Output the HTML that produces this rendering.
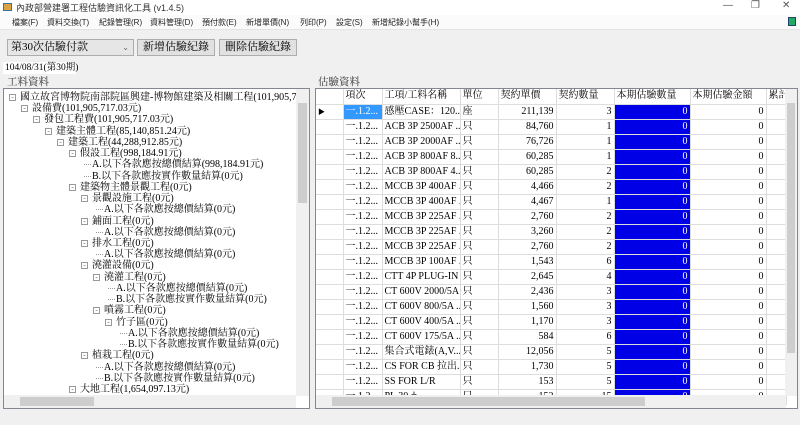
<!DOCTYPE html>
<html><head><meta charset="utf-8"><style>
*{margin:0;padding:0;box-sizing:border-box}
body{width:800px;height:425px;overflow:hidden;background:#f0f0f0;font-family:"Liberation Serif","Noto Serif CJK SC",serif;font-size:11px;color:#000;position:relative}
.abs{position:absolute;white-space:nowrap}
.ui{font-family:"Liberation Sans","Noto Sans CJK SC",sans-serif}
#title{left:0;top:0;width:800px;height:15px;background:#fff}
#menu{left:0;top:15px;width:800px;height:15px;background:#fbfbfb;border-bottom:1px solid #e4e4e4}
.m{position:absolute;top:2px;font-size:8px;color:#222}
.btn{position:absolute;top:39px;height:17px;background:#e1e1e1;border:1px solid #adadad;font-size:11px;text-align:center;line-height:15px}
#tree{left:3px;top:88px;width:307px;height:321px;background:#fff;border:1px solid #828790;overflow:hidden}
.tn{position:absolute;height:11px;line-height:11px;font-size:10px;white-space:nowrap}
.bx{position:absolute;width:7px;height:7px;border:1px solid #999;background:#fff;font-size:7px;line-height:5px;text-align:center;color:#555}
#grid{left:315px;top:88px;width:483px;height:321px;background:#fff;border:1px solid #828790;overflow:hidden}
table{border-collapse:collapse;position:absolute;left:0;top:0;table-layout:fixed;width:470px}
td{height:15px;border-right:1px solid #ddd;border-bottom:1px solid #ddd;font-size:10px;padding:0 2px;overflow:hidden;white-space:nowrap;line-height:14px}
tr.h td{background:#fff;height:15px}
td.r{text-align:right}
td.b{background:#0000e6;color:#fff;text-align:right}
td.rh{background:#fff;font-size:7px}
</style></head><body>
<div id="title" class="abs ui"><div style="position:absolute;left:3px;top:3px;width:9px;height:8px;background:#d9a441;border:1px solid #3a6ea5"></div><span style="position:absolute;left:16px;top:1px;font-size:9px;color:#333">內政部營建署工程估驗資訊化工具 (v1.4.5)</span>
<span style="position:absolute;left:723px;top:0;font-size:10px;color:#555">—</span><span style="position:absolute;left:751px;top:0;font-size:10px;color:#555">❐</span><span style="position:absolute;left:782px;top:0;font-size:10px;color:#555">✕</span></div>
<div id="menu" class="abs ui">
<span class="m" style="left:12px">檔案(F)</span><span class="m" style="left:47px">資料交換(T)</span><span class="m" style="left:99px">紀錄管理(R)</span><span class="m" style="left:150px">資料管理(D)</span><span class="m" style="left:202px">預付款(E)</span><span class="m" style="left:246px">新增單價(N)</span><span class="m" style="left:300px">列印(P)</span><span class="m" style="left:336px">設定(S)</span><span class="m" style="left:372px">新增紀錄小幫手(H)</span>
<div style="position:absolute;left:788px;top:2px;width:8px;height:9px;background:#2a6;border:1px solid #246"></div></div>
<div class="abs" style="left:7px;top:39px;width:127px;height:17px;background:#e6e6e6;border:1px solid #adadad;font-size:11px;line-height:15px;padding-left:3px">第30次估驗付款<span style="position:absolute;right:4px;top:0;font-size:8px;color:#666">⌄</span></div>
<div class="btn" style="left:137px;width:78px">新增估驗紀錄</div>
<div class="btn" style="left:219px;width:78px">刪除估驗紀錄</div>
<div class="abs" style="left:3px;top:62px;width:73px;height:12px;background:#fff;font-size:9.5px;line-height:12px;padding-left:2px">104/08/31(第30期)</div>
<div class="abs" style="left:7px;top:74px;font-size:10.5px;color:#333">工料資料</div>
<div class="abs" style="left:318px;top:74px;font-size:10.5px;color:#333">估驗資料</div>
<div id="tree" class="abs">
<div id="tn"></div>
<div style="position:absolute;right:0;top:0;width:13px;height:307px;background:#f0f0f0"><div style="position:absolute;left:2px;top:14px;width:9px;height:100px;background:#cdcdcd"></div></div>
<div style="position:absolute;left:0;bottom:0;width:292px;height:13px;background:#f0f0f0"><div style="position:absolute;left:16px;top:2px;width:74px;height:9px;background:#cdcdcd"></div></div>
</div>
<div id="grid" class="abs">
<table id="tb"><colgroup><col style="width:27px"><col style="width:39px"><col style="width:78px"><col style="width:38px"><col style="width:58px"><col style="width:58px"><col style="width:76px"><col style="width:76px"><col style="width:20px"></colgroup></table>
<div style="position:absolute;right:0;top:0;width:12px;height:307px;background:#f0f0f0"><div style="position:absolute;left:2px;top:14px;width:8px;height:250px;background:#cdcdcd"></div></div>
<div style="position:absolute;left:0;bottom:0;width:470px;height:13px;background:#f0f0f0"><div style="position:absolute;left:16px;top:2px;width:313px;height:9px;background:#cdcdcd"></div></div>
</div>
<script>
var t=[[0,"國立故宮博物院南部院區興建-博物館建築及相關工程(101,905,717.03"],[1,"設備費(101,905,717.03元)"],[2,"發包工程費(101,905,717.03元)"],[3,"建築主體工程(85,140,851.24元)"],[4,"建築工程(44,288,912.85元)"],[5,"假設工程(998,184.91元)"],[6,"A.以下各款應按總價結算(998,184.91元)",1],[6,"B.以下各款應按實作數量結算(0元)",1],[5,"建築物主體景觀工程(0元)"],[6,"景觀設施工程(0元)"],[7,"A.以下各款應按總價結算(0元)",1],[6,"鋪面工程(0元)"],[7,"A.以下各款應按總價結算(0元)",1],[6,"排水工程(0元)"],[7,"A.以下各款應按總價結算(0元)",1],[6,"澆灌設備(0元)"],[7,"澆灌工程(0元)"],[8,"A.以下各款應按總價結算(0元)",1],[8,"B.以下各款應按實作數量結算(0元)",1],[7,"噴霧工程(0元)"],[8,"竹子區(0元)"],[9,"A.以下各款應按總價結算(0元)",1],[9,"B.以下各款應按實作數量結算(0元)",1],[6,"植栽工程(0元)"],[7,"A.以下各款應按總價結算(0元)",1],[7,"B.以下各款應按實作數量結算(0元)",1],[5,"大地工程(1,654,097.13元)"]];
var h="";t.forEach(function(e,i){var x=16+12*e[0],y=3+i*11.23;
if(!e[2])h+='<div class="bx" style="left:'+(x-11)+'px;top:'+(y+2)+'px">-</div>';else h+='<div style="position:absolute;left:'+(x-8)+'px;top:'+(y+5)+'px;width:7px;border-top:1px dotted #999"></div>';
h+='<div class="tn" style="left:'+x+'px;top:'+y+'px">'+e[1]+'</div>';});
document.getElementById("tn").innerHTML=h;
var r=[["感壓CASE：120...","座","211,139",3],["ACB 3P 2500AF ...","只","84,760",1],["ACB 3P 2000AF ...","只","76,726",1],["ACB 3P 800AF 8...","只","60,285",1],["ACB 3P 800AF 4...","只","60,285",2],["MCCB 3P 400AF ...","只","4,466",2],["MCCB 3P 400AF ...","只","4,467",1],["MCCB 3P 225AF ...","只","2,760",2],["MCCB 3P 225AF ...","只","3,260",2],["MCCB 3P 225AF ...","只","2,760",2],["MCCB 3P 100AF ...","只","1,543",6],["CTT 4P PLUG-IN","只","2,645",4],["CT 600V 2000/5A ...","只","2,436",3],["CT 600V 800/5A ...","只","1,560",3],["CT 600V 400/5A ...","只","1,170",3],["CT 600V 175/5A ...","只","584",6],["集合式電錶(A,V...","只","12,056",5],["CS FOR CB 拉出...","只","1,730",5],["SS FOR L/R","只","153",5],["PL 30 ф","只","152",15]];
var s='<tr class="h"><td></td><td>項次</td><td>工項/工料名稱</td><td>單位</td><td>契約單價</td><td>契約數量</td><td>本期估驗數量</td><td>本期估驗金額</td><td>累計</td></tr>';
r.forEach(function(e,i){s+='<tr><td class="rh">'+(i==0?'▶':'')+'</td><td'+(i==0?' style="background:#3399ff;color:#fff"':'')+'>一.1.2...</td><td>'+e[0]+'</td><td>'+e[1]+'</td><td class="r">'+e[2]+'</td><td class="r">'+e[3]+'</td><td class="b">0</td><td class="r">0</td><td></td></tr>';});
document.getElementById("tb").innerHTML+=s;
</script>
</body></html>
